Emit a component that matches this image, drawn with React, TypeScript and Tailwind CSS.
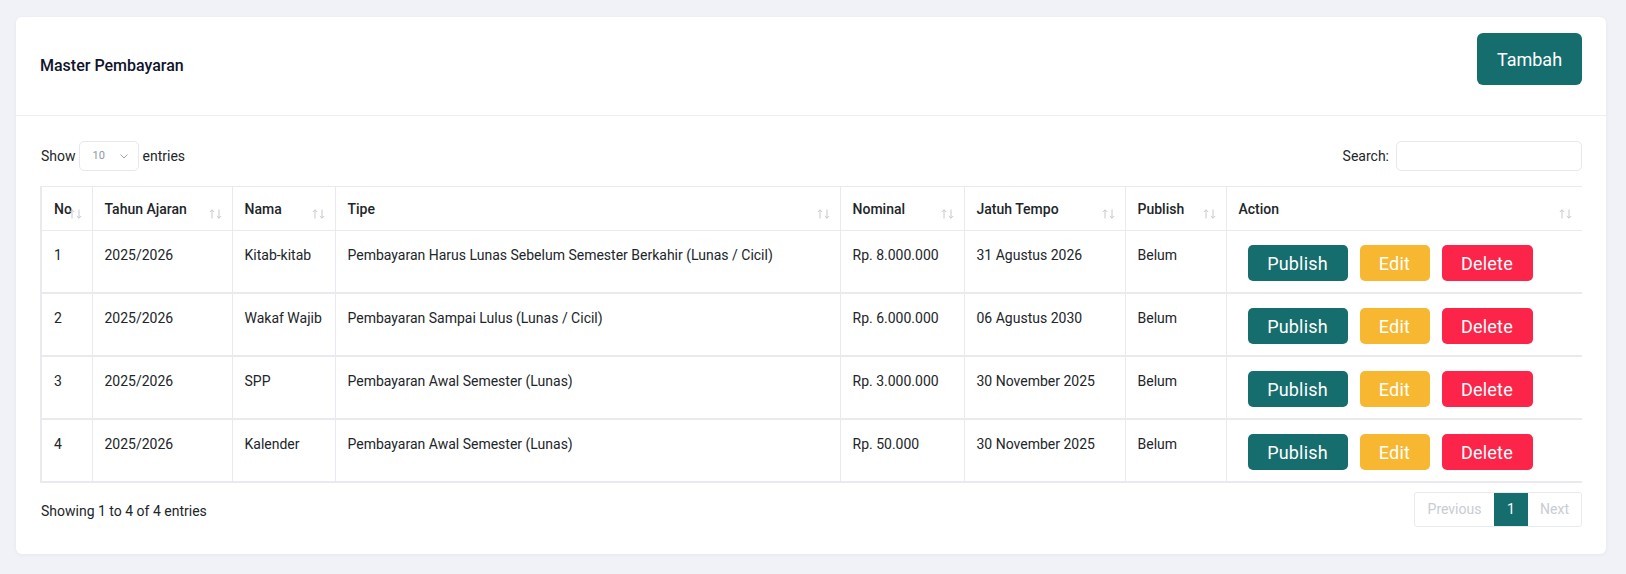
import React from 'react';

type Row = {
  no: number;
  tahun: string;
  nama: string;
  tipe: string;
  nominal: string;
  tempo: string;
  publish: string;
};

const rows: Row[] = [
  { no: 1, tahun: '2025/2026', nama: 'Kitab-kitab', tipe: 'Pembayaran Harus Lunas Sebelum Semester Berkahir (Lunas / Cicil)', nominal: 'Rp. 8.000.000', tempo: '31 Agustus 2026', publish: 'Belum' },
  { no: 2, tahun: '2025/2026', nama: 'Wakaf Wajib', tipe: 'Pembayaran Sampai Lulus (Lunas / Cicil)', nominal: 'Rp. 6.000.000', tempo: '06 Agustus 2030', publish: 'Belum' },
  { no: 3, tahun: '2025/2026', nama: 'SPP', tipe: 'Pembayaran Awal Semester (Lunas)', nominal: 'Rp. 3.000.000', tempo: '30 November 2025', publish: 'Belum' },
  { no: 4, tahun: '2025/2026', nama: 'Kalender', tipe: 'Pembayaran Awal Semester (Lunas)', nominal: 'Rp. 50.000', tempo: '30 November 2025', publish: 'Belum' },
];

const columns = [
  { label: 'No', w: 'w-[51px] border-l-2' },
  { label: 'Tahun Ajaran', w: 'w-[140px]' },
  { label: 'Nama', w: 'w-[103px]' },
  { label: 'Tipe', w: 'w-[505px]' },
  { label: 'Nominal', w: 'w-[124px]' },
  { label: 'Jatuh Tempo', w: 'w-[161px]' },
  { label: 'Publish', w: 'w-[101px]' },
  { label: 'Action', w: 'border-r-0' },
];

const SortIcon = () => (
  <svg width="13" height="10" viewBox="0 0 13 10" fill="none" stroke="#c4c8d0" strokeWidth="1">
    <path d="M3 9.5V0.8M0.8 3L3 0.8L5.2 3" />
    <path d="M10 0.5V9.2M7.8 7L10 9.2L12.2 7" />
  </svg>
);

export default function App() {
  return (
    <div className="min-h-screen bg-[#f0f2f7] pt-[17px] pl-4 pr-5 pb-5 font-['Roboto',sans-serif] text-[#212529]">
      <div className="bg-white rounded-md shadow-[0_1px_4px_rgba(20,30,60,0.05)]">
        {/* Header */}
        <div className="h-[99px] flex items-center justify-between px-6 border-b border-[#eceef2]">
          <h1 className="text-[16px] font-medium text-[#10132b]">Master Pembayaran</h1>
          <button className="self-start mt-4 h-[52px] w-[105px] rounded-md bg-[#166d6d] text-white text-[18px]">
            Tambah
          </button>
        </div>

        {/* Body */}
        <div className="px-6 pt-[25px] pb-[27px]">
          <div className="flex items-center justify-between h-[30px] text-[14px]">
            <div className="flex items-center">
              <span className="ml-px">Show</span>
              <div className="ml-[3px] mr-[4px] h-[30px] w-[60px] border border-[#e6e8ee] rounded-[5px] flex items-center pl-[13px] pr-[10px] justify-between">
                <span className="text-[11px] text-[#8f98a8]">10</span>
                <svg width="8" height="5" viewBox="0 0 8 5" fill="none" stroke="#9aa1ad" strokeWidth="1">
                  <path d="M0.5 0.5L4 4L7.5 0.5" />
                </svg>
              </div>
              <span>entries</span>
            </div>
            <div className="flex items-center">
              <span className="mr-[7px]">Search:</span>
              <input className="h-[30px] w-[186px] border border-[#e6e8ee] rounded-[5px] outline-none px-2" />
            </div>
          </div>

          <div className="mt-[15px] overflow-hidden">
            <table className="w-full table-fixed border-collapse text-[14px]">
              <thead>
                <tr>
                  {columns.map(c => (
                    <th
                      key={c.label}
                      className={`relative h-[44px] px-3 text-left font-medium leading-5 border border-[#e8eaef] ${c.w}`}
                    >
                      <span className="relative z-0">{c.label}</span>
                      <span className="absolute right-[10px] top-[22px] flex">
                        <SortIcon />
                      </span>
                    </th>
                  ))}
                </tr>
              </thead>
              <tbody>
                {rows.map(r => (
                  <tr key={r.no} className="border-b-2 border-[#e8eaef]">
                    <td className="align-top px-3 pt-[14px] leading-5 border-l-2 border-r border-[#e8eaef]">{r.no}</td>
                    <td className="align-top px-3 pt-[14px] leading-5 border-r border-[#e8eaef]">{r.tahun}</td>
                    <td className="align-top px-3 pt-[14px] leading-5 border-r border-[#e8eaef] whitespace-nowrap">{r.nama}</td>
                    <td className="align-top px-3 pt-[14px] leading-5 border-r border-[#e8eaef]">{r.tipe}</td>
                    <td className="align-top px-3 pt-[14px] leading-5 border-r border-[#e8eaef]">{r.nominal}</td>
                    <td className="align-top px-3 pt-[14px] leading-5 border-r border-[#e8eaef]">{r.tempo}</td>
                    <td className="align-top px-3 pt-[14px] leading-5 border-r border-[#e8eaef]">{r.publish}</td>
                    <td className="align-top pl-[21px] pt-[14px] pb-[11px]">
                      <div className="flex gap-3 text-[18px] text-white tracking-[0.2px]">
                        <button className="h-9 w-[100px] rounded-[5px] bg-[#166d6d]">Publish</button>
                        <button className="h-9 w-[70px] rounded-[5px] bg-[#f7b731]">Edit</button>
                        <button className="h-9 w-[91px] rounded-[5px] bg-[#fc2549]">Delete</button>
                      </div>
                    </td>
                  </tr>
                ))}
              </tbody>
            </table>
          </div>

          <div className="mt-[9px] flex items-center justify-between text-[14px]">
            <span className="ml-px mt-[3px]">Showing 1 to 4 of 4 entries</span>
            <div className="flex h-[35px] border border-[#e8eaef] rounded-[3px] text-[#c8ccd4]">
              <span className="w-[79px] flex items-center justify-center">Previous</span>
              <span className="w-[34px] flex items-center justify-center bg-[#166d6d] text-white">1</span>
              <span className="w-[53px] flex items-center justify-center">Next</span>
            </div>
          </div>
        </div>
      </div>
    </div>
  );
}
